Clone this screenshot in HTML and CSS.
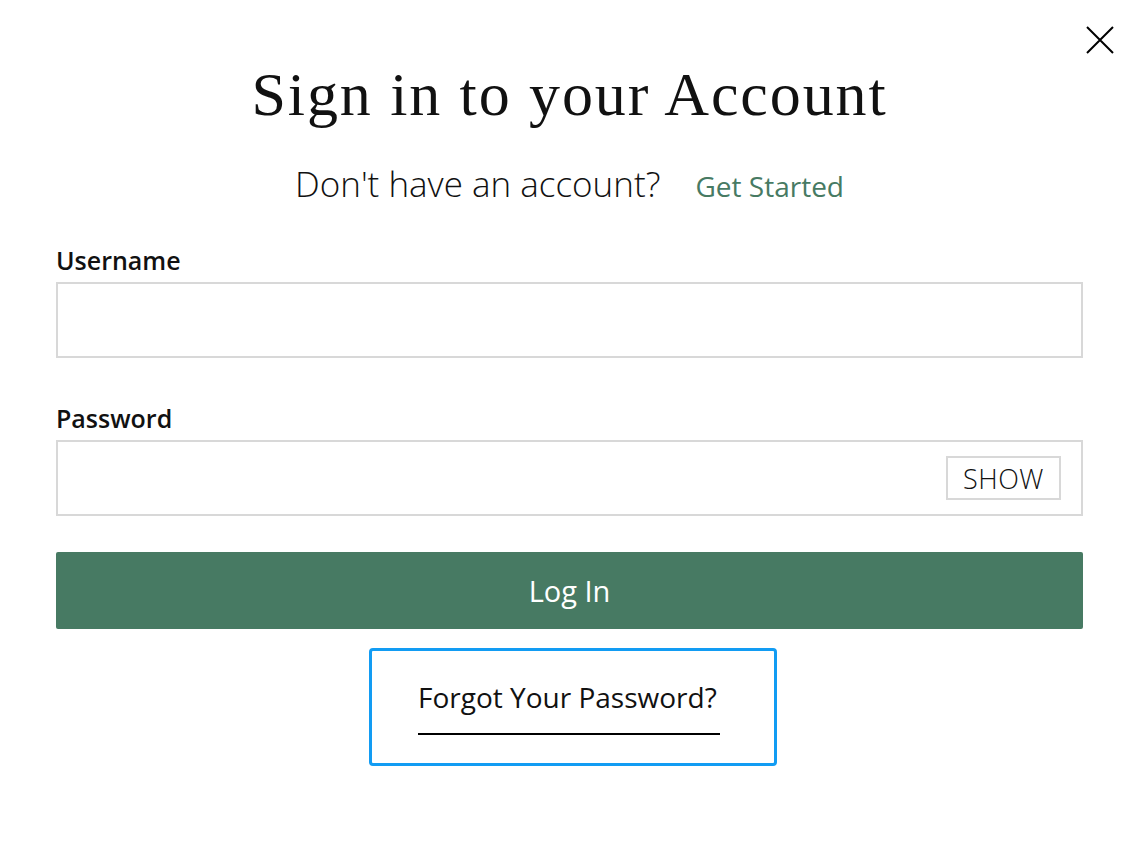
FILE: index.html
```html
<!DOCTYPE html>
<html>

<head>
  <meta charset="UTF-8">
  <title>Sign in</title>
  <link rel="stylesheet" href="styles.css">
</head>

<body>
  <div class="modal">
    <button class="close-button" aria-label="Close">
      <svg width="28" height="28" viewBox="0 0 28 28">
        <path d="M1 1 L27 27 M27 1 L1 27" stroke="#000" stroke-width="2" fill="none" />
      </svg>
    </button>

    <h1 class="title">Sign in to your Account</h1>
    <p class="subtitle">Don't have an account? <a href="#" class="get-started">Get Started</a></p>

    <form class="login-form">
      <label class="field-label" for="username">Username</label>
      <input class="field-input" id="username" type="text">

      <label class="field-label" for="password">Password</label>
      <div class="password-wrap">
        <input class="field-input" id="password" type="password">
        <button type="button" class="show-button">SHOW</button>
      </div>

      <button type="submit" class="login-button">Log In</button>
    </form>

    <div class="forgot-row">
      <a href="#" class="forgot-link">Forgot Your Password?</a>
    </div>
  </div>
</body>

</html>
```

FILE: styles.css
```css
body {
  margin: 0;
  background-color: #fff;
  font-family: "Open Sans", Lato, sans-serif;
  color: #111;
}

.modal {
  position: relative;
  padding: 0 56px;
}

.close-button {
  position: absolute;
  top: 26px;
  right: 25px;
  background: none;
  border: none;
  padding: 0;
  cursor: pointer;
}

.close-button svg {
  display: block;
}

.title {
  margin: 0;
  padding-top: 58px;
  font-family: "Liberation Serif", serif;
  font-weight: normal;
  font-size: 62px;
  letter-spacing: 1.9px;
  line-height: 72px;
  text-align: center;
  color: #111;
}

.subtitle {
  margin: 34px 0 0;
  text-align: center;
  font-size: 35px;
  line-height: 40px;
  font-weight: 300;
  color: #111;
}

.get-started {
  margin-left: 26px;
  font-size: 28px;
  font-weight: normal;
  color: #477a63;
  text-decoration: none;
}

.login-form {
  display: flex;
  flex-direction: column;
  margin-top: 39px;
}

.field-label {
  font-size: 25px;
  font-weight: 600;
  line-height: 30px;
  margin-bottom: 7px;
}

.field-input {
  box-sizing: border-box;
  width: 100%;
  height: 76px;
  border: 2px solid #d8d8d8;
  border-radius: 0;
  font-size: 22px;
  padding: 0 16px;
  margin-bottom: 45px;
}

.password-wrap {
  position: relative;
}

.show-button {
  position: absolute;
  top: 16px;
  right: 22px;
  width: 115px;
  height: 44px;
  background: #fff;
  border: 2px solid #d8d8d8;
  font-family: "Open Sans", Lato, sans-serif;
  font-size: 27px;
  letter-spacing: 0.5px;
  font-weight: 300;
  color: #111;
  padding: 0;
  cursor: pointer;
}

.login-button {
  margin-top: -9px;
  height: 77px;
  background-color: #477a63;
  color: #fff;
  border: none;
  border-radius: 2px;
  font-family: "Open Sans", Lato, sans-serif;
  font-size: 29px;
  cursor: pointer;
}

.forgot-row {
  display: flex;
  justify-content: center;
  margin-top: 19px;
}

.forgot-link {
  display: block;
  width: 302px;
  margin-left: 7px;
  padding: 27px 54px 47px 46px;
  border: 3px solid #129cf3;
  border-radius: 4px;
  font-size: 28px;
  line-height: 38px;
  white-space: nowrap;
  color: #111;
  text-decoration: none;
  background-image: linear-gradient(#000, #000);
  background-size: 302px 2px;
  background-position: 46px 82px;
  background-repeat: no-repeat;
}
```
